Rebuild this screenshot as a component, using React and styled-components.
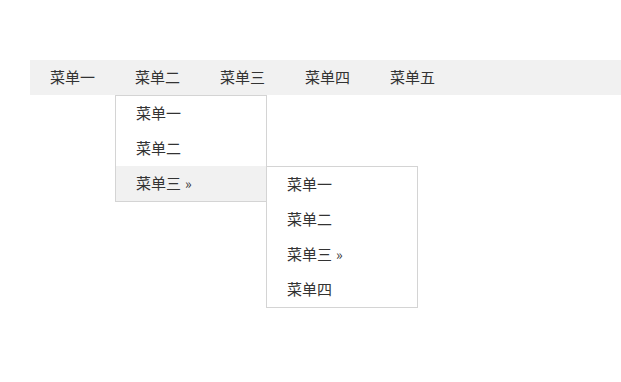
import React from "react";
import styled, { createGlobalStyle } from "styled-components";

const GlobalStyle = createGlobalStyle`
  body {
    margin: 0;
    background: #fff;
    font-family: "Noto Sans CJK SC", "Noto Sans", sans-serif;
    color: #333;
  }
  ul { list-style: none; margin: 0; padding: 0; }
`;

const Page = styled.div`
  padding: 60px 0 0 30px;
  min-height: 322px;
`;

const NavBar = styled.ul`
  display: flex;
  height: 35px;
  background: #f1f1f1;
`;

const NavItem = styled.li`
  position: relative;
  padding: 0 20px;
  line-height: 34px;
  font-size: 15px;
`;

const Dropdown = styled.ul`
  position: absolute;
  top: ${props => (props.$sub ? "0" : "35px")};
  left: ${props => (props.$sub ? "150px" : "0")};
  width: 150px;
  background: #fff;
  border: 1px solid #d4d4d4;
  z-index: 1;
`;

const DropItem = styled.li`
  position: relative;
  height: 35px;
  line-height: 34px;
  padding-left: 20px;
  font-size: 15px;
  background: ${props => (props.$active ? "#f1f1f1" : "#fff")};
`;

const Arrow = styled.span`
  margin-left: 4px;
  font-size: 14px;
`;

const App = () => (
  <Page>
    <GlobalStyle />
    <NavBar>
      <NavItem>菜单一</NavItem>
      <NavItem>
        菜单二
        <Dropdown>
          <DropItem>菜单一</DropItem>
          <DropItem>菜单二</DropItem>
          <DropItem $active>
            菜单三<Arrow>»</Arrow>
            <Dropdown $sub>
              <DropItem>菜单一</DropItem>
              <DropItem>菜单二</DropItem>
              <DropItem>菜单三<Arrow>»</Arrow></DropItem>
              <DropItem>菜单四</DropItem>
            </Dropdown>
          </DropItem>
        </Dropdown>
      </NavItem>
      <NavItem>菜单三</NavItem>
      <NavItem>菜单四</NavItem>
      <NavItem>菜单五</NavItem>
    </NavBar>
  </Page>
);

export default App;
